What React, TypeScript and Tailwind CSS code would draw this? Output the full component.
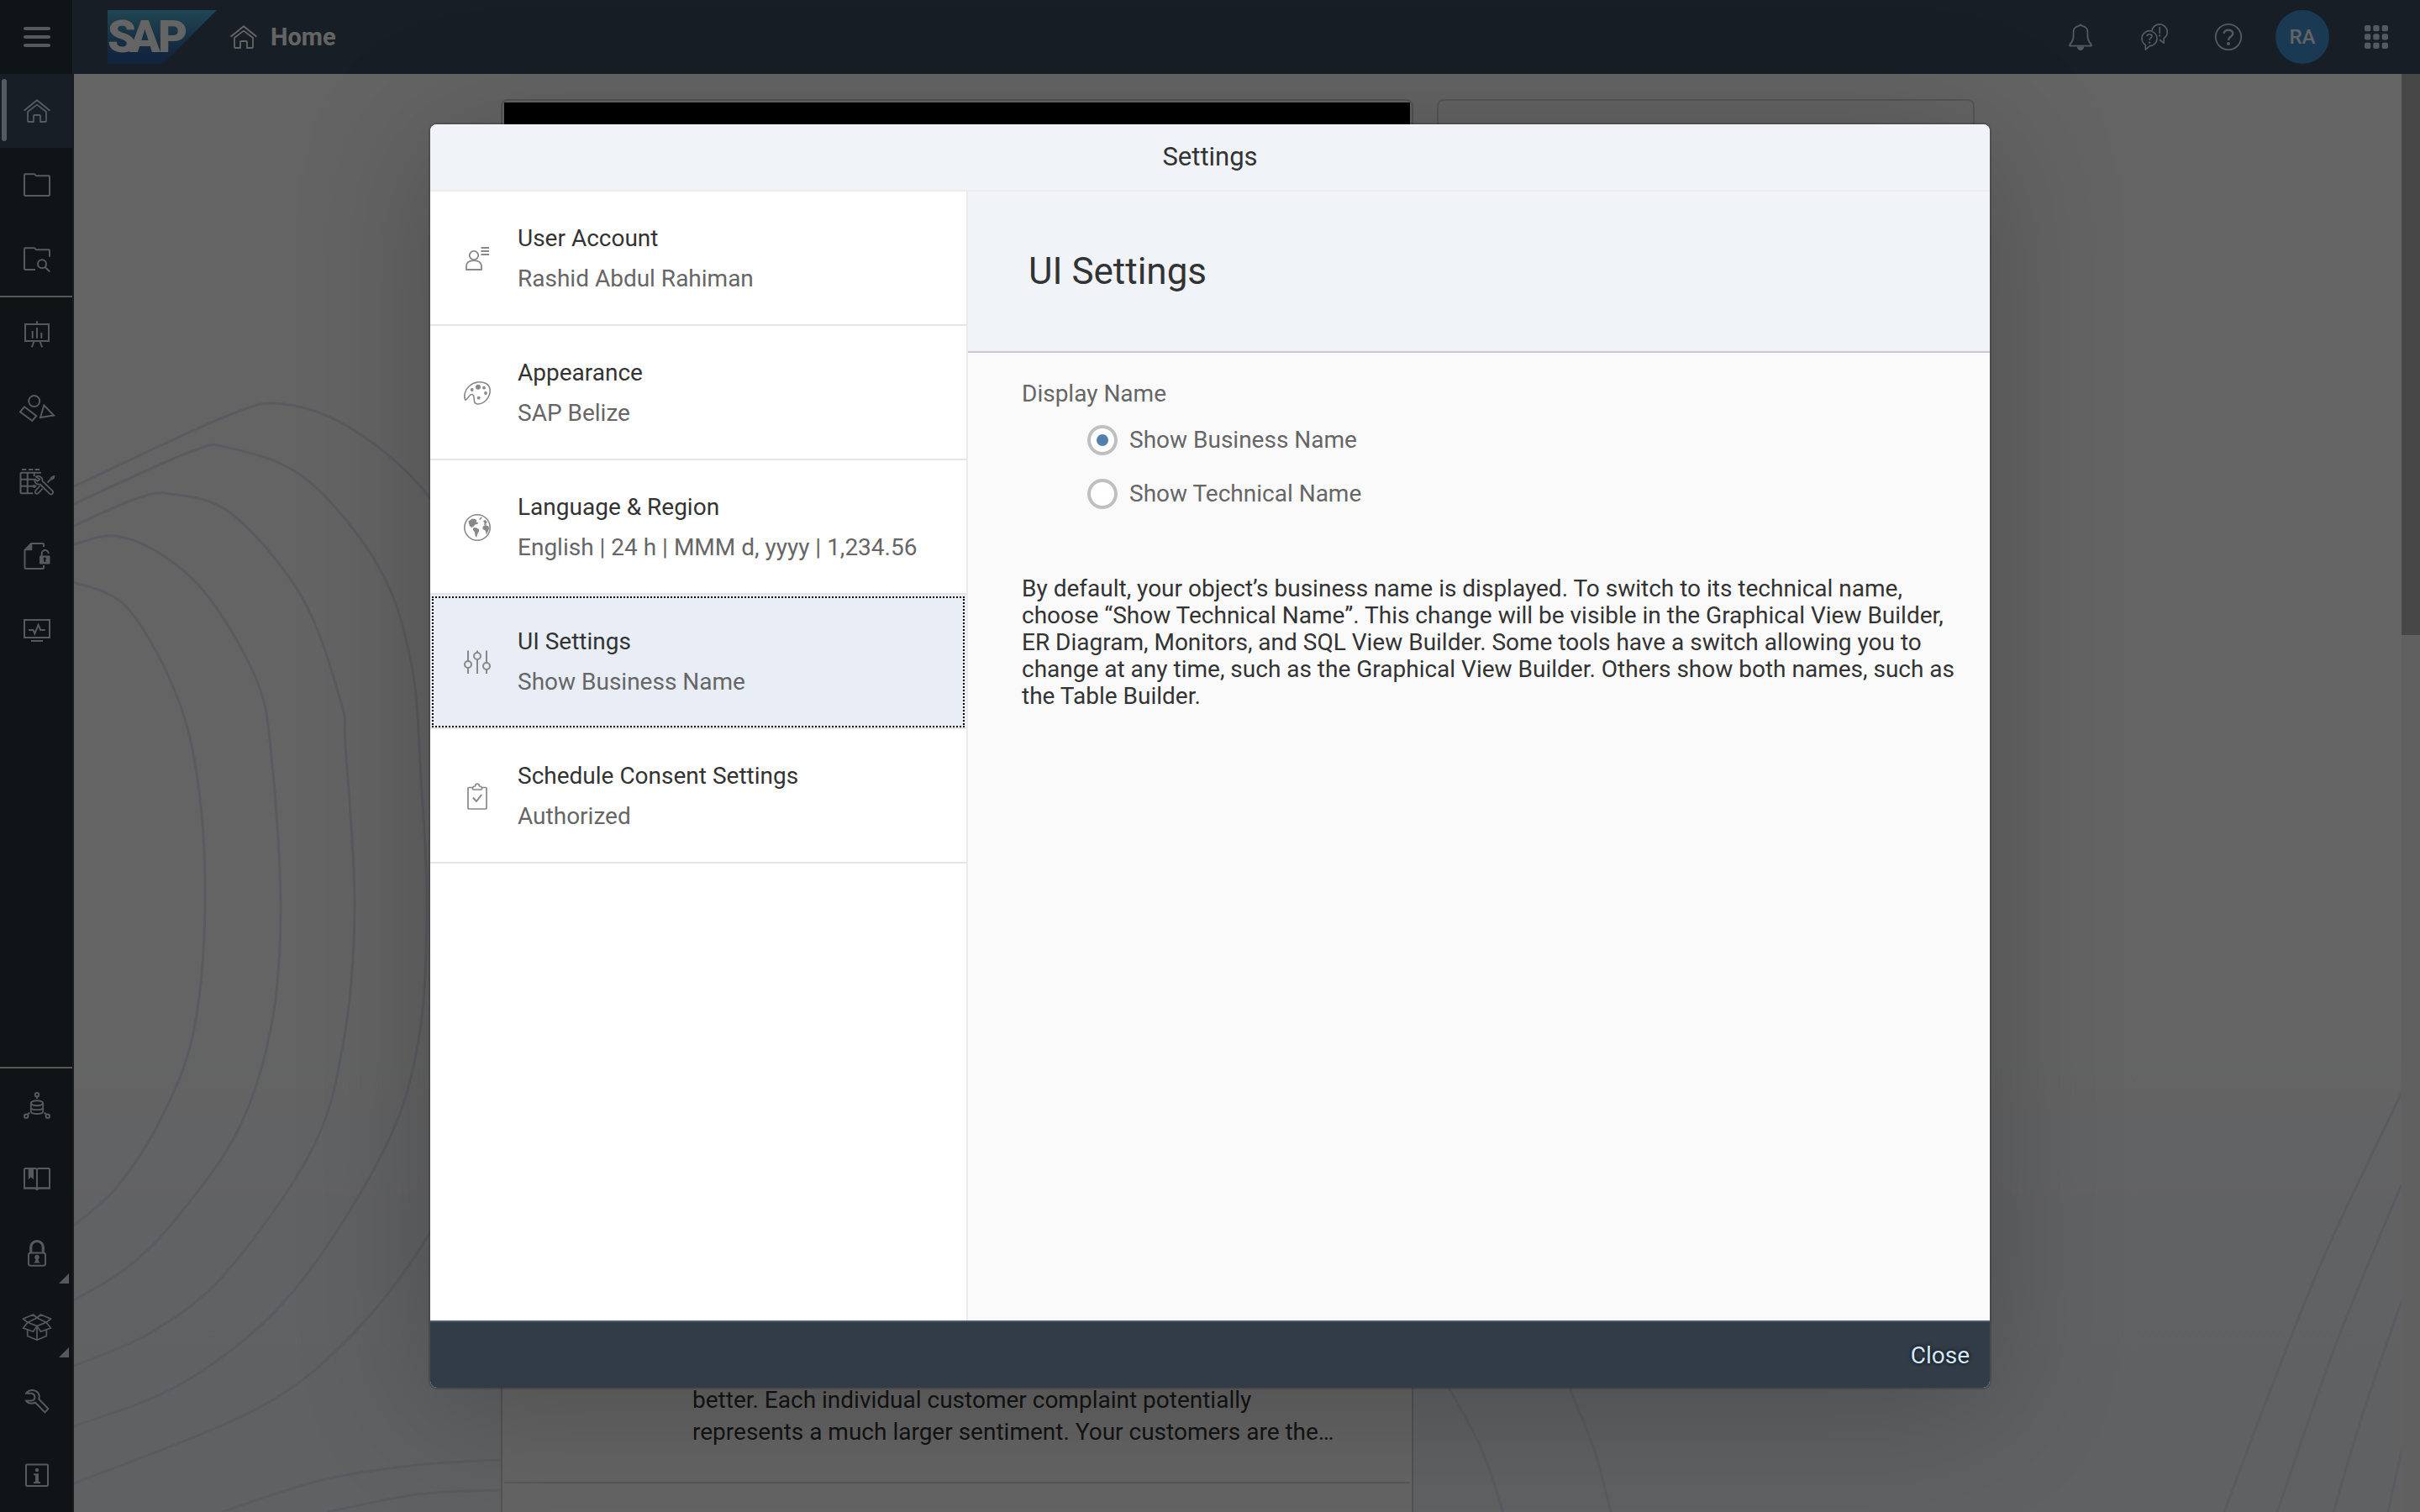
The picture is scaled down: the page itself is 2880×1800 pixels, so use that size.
import { useState, type ReactNode } from "react";

type IconProps = { children: ReactNode; wide?: boolean; fill?: boolean };

function Icon({ children, wide, fill }: IconProps) {
  return (
    <svg
      aria-hidden="true"
      viewBox={wide ? "0 0 44 32" : "0 0 32 32"}
      className={wide ? "h-8 w-11 shrink-0 overflow-visible" : "h-8 w-8 shrink-0 overflow-visible"}
      fill={fill ? "currentColor" : "none"}
      stroke={fill ? "none" : "currentColor"}
      strokeWidth={2}
      strokeLinejoin="round"
    >
      {children}
    </svg>
  );
}

const HomeIcon = () => (
  <Icon>
    <path d="M.6 15.8 16 3.2l15.4 12.6" />
    <path d="M5 17 16 8.6 27 17v11q0 1-1 1h-6v-7q0-1-1-1h-6q-1 0-1 1v7H6q-1 0-1-1z" strokeWidth={1.8} />
  </Icon>
);

const FolderIcon = () => (
  <Icon>
    <path d="M2 3.2h10.6q1 0 1.4 1t1.4 1H30q1 0 1 1V28q0 1-1 1H2q-1 0-1-1V4.200q0-1 1-1z" />
  </Icon>
);

const FolderSearchIcon = () => (
  <Icon>
    <path d="M14 29H2q-1 0-1-1V4.200q0-1 1-1h10.600q1 0 1.400 1t1.400 1H30q1 0 1 1v7.500" />
    <circle cx="22" cy="22.300" r="5" />
    <path d="m25.600 26 5.700 5.500" />
  </Icon>
);

const BoardIcon = () => (
  <Icon>
    <path d="M2 4h28v20H2zM16 .3V4M12.500 24.500 9.800 31.500M19.500 24.500l2.700 7M10.700 12v8.700M16 8v12.700M21.300 14v6.700" strokeLinejoin="miter" />
  </Icon>
);

const ShapesIcon = () => (
  <Icon wide>
    <circle cx="18.700" cy="7.500" r="6.500" />
    <path d="m7 14.300 14.300 10.800-5 5.900L2 20.300zM30.400 12.500l11.600 12-16 2.500z" strokeLinejoin="miter" />
  </Icon>
);

const TableToolsIcon = () => (
  <Icon wide>
    <path d="M4 1h5.300M12 1h5.300M19.500 1H25" />
    <path d="M17.300 29.300H3.500q-1 0-1-1V5.700q0-1 1-1H27M2.500 12.700h16.300M2.500 20.700h18.800M10.700 4.700v24.600M18.700 5v4M18.700 19v4" />
    <path d="M20.800 9.400c3-1.900 8.300.3 7.700 5.300l12 11.600c2 2.200-1.200 5.500-3.400 3.500L25.800 18.500c-4 1-7.300-2-6.300-6.200l3.200 2.500 2.600-2.200z" strokeWidth={1.8} />
    <path d="M34.500 16.500 38 13M38.500 12.500c0-2 1.500-3 4-3.700-.3 2.500-1.500 4-4 3.700z" strokeWidth={1.8} />
    <path d="m25.500 20.500-5.200 5.700c-1.600 2 .9 4.700 2.900 3.200l5.600-5.700" strokeWidth={1.8} />
  </Icon>
);

const FileUnlockIcon = () => (
  <Icon>
    <path d="M24 5V2q0-1-1-1H9L1.500 9v21q0 1 1 1H23q1 0 1-1v-3" />
    <path d="M1.500 9.300 9 1h1.300v7.300q0 1-1 1z" fill="currentColor" stroke="none" />
    <path d="M21.700 16v-3a4 4 0 0 1 8 0" />
    <path
      d="M20 15.400h10.500q1 0 1 1v8q0 1-1 1H20q-1 0-1-1v-8q0-1 1-1zM25.200 17.400a1.700 1.700 0 0 0-.9 3.100v2.500h1.900v-2.500a1.700 1.700 0 0 0-1-3.100z"
      fill="currentColor"
      fillRule="evenodd"
      stroke="none"
    />
  </Icon>
);

const MonitorIcon = () => (
  <Icon>
    <path d="M1 4h30v21H1zM9 29h14M6 16h5.500l1.800 4.300 4.300-10.500 2.600 6.200h5.600" strokeLinejoin="miter" />
  </Icon>
);

const DataIcon = () => (
  <Icon>
    <circle cx="16" cy="3.200" r="2.200" />
    <circle cx="3.200" cy="28.800" r="2.200" />
    <circle cx="28.800" cy="28.800" r="2.200" />
    <path d="M16 5.500V8M4.800 27.200 7.200 24.500M27.200 27.200l-2.400-2.700" />
    <ellipse cx="16" cy="13.200" rx="7.200" ry="3" />
    <path d="M8.800 13.200v9.800c0 4 14.400 4 14.400 0v-9.800M8.800 18.200c0 4 14.400 4 14.400 0" strokeWidth={1.8} />
  </Icon>
);

const BookIcon = () => (
  <Icon>
    <path d="M1 27V4q0-1 1-1h12q1.500 0 2 1.200Q16.500 3 18 3h12q1 0 1 1v23M16 4v22" />
    <path d="M0 25.200h14.200l1.800.8 1.800-.8H32v2.500H18.500L16 29.500l-2.500-1.800H0zM5.700 3H12v13.300l-3.100-3-3.200 3z" fill="currentColor" stroke="none" />
  </Icon>
);

const LockIcon = () => (
  <Icon>
    <rect x="6" y="15.500" width="20" height="15.300" rx="2.500" />
    <path d="M8.700 15V8.800a7.300 7.300 0 0 1 14.600 0V15" strokeWidth={3.2} />
    <path d="M16 17.800a3 3 0 0 0-1.500 5.500q-.2 2.800-2.500 4.300h8q-2.300-1.500-2.500-4.300A3 3 0 0 0 16 17.800z" fill="currentColor" stroke="none" />
  </Icon>
);

const BoxIcon = () => (
  <Icon>
    <path
      d="M5 10.300-.5 6l12-5L16 5l4.500-4 12 5L27 10.300 16 5zM27 10.300l5.500 6.700-12 4.300L16 14.600l11-4.300M5 10.300l-5.500 6.700 12 4.300 4.500-6.700zM4.700 19.500v7L16 31.200l11.300-4.700v-7M16 14.600v16.600"
      strokeWidth={1.7}
    />
  </Icon>
);

const WrenchIcon = () => (
  <Icon>
    <path d="M2.800 6.800C8 .5 17.500 2.300 18.800 10l-.4 3.800 11 11.300-4 4.300-11.200-11.600C10 19.200 5.500 18.700 2.800 15.500h6.700c5.200-1 5.200-7.700 0-8.700z" />
  </Icon>
);

const InfoIcon = () => (
  <Icon>
    <rect x="3" y="3.500" width="26" height="25.500" rx="1" />
    <path d="M12 14.300h6v9.700h2v2h-8v-2h2v-7.700h-2z" fill="currentColor" stroke="none" />
    <circle cx="16" cy="10" r="2.200" fill="currentColor" stroke="none" />
  </Icon>
);

const BellIcon = () => (
  <Icon>
    <path d="M16 1.300c-1 1-1 1.500-2.700 1.800C9.500 4 7.600 6.500 7.600 10c0 6.500.5 9.500-4.300 15.200q-.9 1.500.7 1.500h24q1.600 0 .7-1.500c-4.800-5.700-4.300-8.700-4.300-15.200 0-3.500-1.900-6-5.700-6.900C17 2.800 17 2.300 16 1.300z" strokeWidth={1.8} />
    <path d="M11.800 27.500h8.400c-.4 5.900-8 5.900-8.400 0z" fill="currentColor" stroke="none" />
  </Icon>
);

const FeedbackIcon = () => (
  <Icon>
    <path d="M5.300 31v-5.500A9 9 0 1 1 19 18c0 5-4 8.500-8.500 8.700z" strokeWidth={1.7} />
    <path d="M13 8.300A9.200 9.200 0 1 1 27.200 17.700v5.500L22 19.300" strokeWidth={1.7} />
    <path d="M7 15.200c.3-3.300 6-3.300 6 0 0 2-3 2-3 4.600M22.200 4v8" strokeWidth={1.7} />
    <circle cx="10" cy="22.600" r="1.200" fill="currentColor" stroke="none" />
    <circle cx="22.200" cy="14.400" r="1.200" fill="currentColor" stroke="none" />
  </Icon>
);

const HelpIcon = () => (
  <Icon>
    <circle cx="16" cy="16" r="15.200" strokeWidth={1.8} />
    <path d="M10.700 12c0-5.600 10.600-5.600 10.600 0 0 3.600-5.300 3.600-5.300 8" strokeWidth={2.4} />
    <circle cx="16" cy="24" r="2" fill="currentColor" stroke="none" />
  </Icon>
);

const GridIcon = () => (
  <Icon fill>
    {[2, 12.3, 22.7].map((y) =>
      [2, 12.3, 22.7].map((x) => <rect key={`${x}-${y}`} x={x} y={y} width="7.300" height="7.300" rx="2" />)
    )}
  </Icon>
);

const MenuIcon = () => (
  <Icon fill>
    <rect y="4" width="32" height="4" rx="2" />
    <rect y="14" width="32" height="4" rx="2" />
    <rect y="24" width="32" height="4" rx="2" />
  </Icon>
);

const AccountIcon = () => (
  <Icon>
    <circle cx="12" cy="12" r="5.200" strokeWidth={1.8} />
    <path d="M3 29v-3.500c0-5 3.500-7.300 9-7.300s9 2.300 9 7.300V29z" strokeWidth={1.8} />
    <path d="M20.500 3H30M20.500 7H30M20.500 11H30" strokeWidth={1.8} />
  </Icon>
);

const PaletteIcon = () => (
  <Icon>
    <path d="M2 24.300C-.5 20 1 12.500 6.500 7.500 12 2.500 20.500 1.500 26.300 4.500c5.500 3 6.200 10 3.200 15.500-2.500 5-7.500 8.500-12 9-3.500.3-5.200-1.500-5.200-5 0-3.500-.3-6.500-3-6.500C6 17.500 5 23.500 2 24.300z" strokeWidth={1.6} />
    <g fill="currentColor" stroke="none">
      <circle cx="9.700" cy="12" r="1.900" />
      <circle cx="17" cy="8.800" r="3" />
      <circle cx="24" cy="9.700" r="1.900" />
      <circle cx="26" cy="16" r="1.900" />
      <circle cx="17.700" cy="21.700" r="1.900" />
    </g>
  </Icon>
);

const GlobeIcon = () => (
  <Icon>
    <circle cx="16" cy="16" r="15.200" strokeWidth={1.6} />
    <g fill="currentColor" stroke="none">
      <path d="m5.500 8.500 4.500-3 4 .5 1.500 2-1 2 3-.3-1.500 2.300-2.500.5-2 2.500-1-.5-.5 2-3-2.200-1-3.300z" />
      <path d="m11 16.500 3-.5 4 2v2.500L16.500 23l-1.500 5-1.500-2.500-.5-4L11 19z" />
      <path d="m18 6 2.500-2.500L22 4l-2.500 3zM23 8l2.500-1 2.500 3-2 1.500 1.500 1L24 13l.5-2.500z" />
      <path d="m22.500 15 3-2 4 1.500.5 3-3 7-1.500-5-3-1.500z" />
    </g>
  </Icon>
);

const SlidersIcon = () => (
  <Icon>
    <circle cx="5" cy="19" r="4" />
    <circle cx="16" cy="9" r="4" />
    <circle cx="27" cy="21" r="4" />
    <path d="M5 2.500V15M5 23v7M16 2.500V5M16 13v17M27 2.500V17M27 25v5" />
  </Icon>
);

const ClipboardIcon = () => (
  <Icon>
    <path d="M11 5.500H6q-1 0-1 1V30q0 1 1 1h20q1 0 1-1V6.500q0-1-1-1h-5" strokeWidth={1.7} />
    <path d="M12 8q-2 0-1.500-2t2.800-2Q14 1.200 16 1.200T18.700 4q2.300 0 2.800 2T20 8z" strokeWidth={1.7} />
    <path d="m11 17.500 4 4.500 6.200-8" />
  </Icon>
);

function SapLogo() {
  return (
    <svg viewBox="0 0 130 64" className="h-16 w-[130px] shrink-0" role="img" aria-label="SAP">
      <defs>
        <linearGradient id="sap-blue" x1="0" y1="0" x2="0" y2="1">
          <stop offset="0" stopColor="#53aece" />
          <stop offset=".45" stopColor="#3f80ad" />
          <stop offset=".8" stopColor="#2f609d" />
          <stop offset="1" stopColor="#2e5899" />
        </linearGradient>
      </defs>
      <path d="M0 0h130L66 64H0z" fill="url(#sap-blue)" />
      <g fill="#fafafa" fontFamily="Roboto, sans-serif" fontWeight="900" fontSize="54">
        <text x="0" y="50">S</text>
        <text x="26" y="50">A</text>
        <text x="60" y="50">P</text>
      </g>
    </svg>
  );
}

type Point = [number, number];

const contours: Point[][] = [
  [[88, 693], [150, 722], [207, 820], [235, 927], [244, 1079], [230, 1230], [191, 1333], [140, 1412], [88, 1459]],
  [[88, 648], [136, 638], [192, 660], [249, 712], [306, 811], [323, 900], [334, 1079], [323, 1221], [283, 1346], [207, 1454], [150, 1510], [88, 1548]],
  [[88, 626], [161, 594], [203, 588], [276, 612], [360, 712], [406, 837], [411, 887], [422, 1079], [409, 1239], [371, 1369], [268, 1516], [180, 1586], [88, 1626]],
  [[88, 600], [226, 538], [272, 533], [364, 570], [452, 677], [490, 793], [501, 927], [508, 1079], [498, 1239], [455, 1373], [344, 1543], [220, 1645], [88, 1698]],
  [[88, 579], [268, 496], [337, 481], [421, 512], [511, 592], [580, 720], [600, 1079], [570, 1350], [511, 1469], [421, 1587], [306, 1677], [88, 1766]],
  [[264, 1800], [383, 1762], [497, 1744], [597, 1738]],
  [[390, 1800], [497, 1779], [597, 1774]],
  [[1690, 1600], [1724, 1652], [1763, 1725], [1789, 1800]],
  [[1850, 1600], [1868, 1652], [1897, 1725], [1917, 1800]],
  [[2858, 1301], [2767, 1493], [2700, 1660], [2647, 1800]],
  [[2858, 1410], [2780, 1600], [2710, 1800]],
  [[2858, 1549], [2813, 1680], [2777, 1800]],
  [[2858, 1727], [2842, 1800]],
];

/* Catmull-Rom spline through the points, as cubic Béziers. */
function smooth(points: Point[]) {
  let d = `M${points[0][0]} ${points[0][1]}`;
  for (let i = 0; i < points.length - 1; i++) {
    const a = points[Math.max(i - 1, 0)];
    const b = points[i];
    const c = points[i + 1];
    const e = points[Math.min(i + 2, points.length - 1)];
    d += `C${b[0] + (c[0] - a[0]) / 6} ${b[1] + (c[1] - a[1]) / 6} ${c[0] - (e[0] - b[0]) / 6} ${c[1] - (e[1] - b[1]) / 6} ${c[0]} ${c[1]}`;
  }
  return d;
}

function Contours() {
  return (
    <svg
      aria-hidden="true"
      viewBox="88 88 2770 1712"
      preserveAspectRatio="xMinYMin slice"
      className="absolute inset-0 h-full w-full"
      fill="none"
      stroke="#e1e1f2"
      strokeWidth={3}
    >
      {contours.map((points, i) => (
        <path key={i} d={smooth(points)} />
      ))}
    </svg>
  );
}

function SideButton({ label, icon, active, more }: { label: string; icon: ReactNode; active?: boolean; more?: boolean }) {
  return (
    <button
      type="button"
      aria-label={label}
      className={`relative flex h-[88px] w-full shrink-0 items-center justify-center pl-0.5 ${active ? "bg-[#3a4b5c]" : ""}`}
    >
      {active && <span className="absolute top-1.5 bottom-2 left-0.5 w-1.5 rounded-sm bg-[#d4e0f2]" />}
      {icon}
      {more && (
        <svg aria-hidden="true" viewBox="0 0 12 12" className="absolute right-1 bottom-2 h-3 w-3" fill="currentColor">
          <path d="M12 0v12H0z" />
        </svg>
      )}
    </button>
  );
}

function Sidebar() {
  return (
    <nav aria-label="Main" className="flex w-[88px] shrink-0 flex-col border-r-2 border-[#3f454c] bg-[#273239] text-[#d4e0f2]">
      <SideButton label="Home" icon={<HomeIcon />} active />
      <SideButton label="Repository" icon={<FolderIcon />} />
      <SideButton label="Repository Explorer" icon={<FolderSearchIcon />} />
      <hr className="border-t-2 border-[#dbd8d4]" />
      <SideButton label="Story Builder" icon={<BoardIcon />} />
      <SideButton label="Business Builder" icon={<ShapesIcon />} />
      <SideButton label="Data Builder" icon={<TableToolsIcon />} />
      <SideButton label="Data Access Controls" icon={<FileUnlockIcon />} />
      <SideButton label="Data Integration Monitor" icon={<MonitorIcon />} />
      <div className="flex-1" />
      <hr className="border-t-2 border-[#dbd8d4]" />
      <SideButton label="Connections" icon={<DataIcon />} />
      <SideButton label="Content" icon={<BookIcon />} />
      <SideButton label="Security" icon={<LockIcon />} more />
      <SideButton label="Transport" icon={<BoxIcon />} more />
      <SideButton label="System" icon={<WrenchIcon />} />
      <SideButton label="About" icon={<InfoIcon />} />
    </nav>
  );
}

function ShellButton({ label, children }: { label: string; children: ReactNode }) {
  return (
    <button type="button" aria-label={label} className="flex h-[88px] w-[88px] items-center justify-center">
      {children}
    </button>
  );
}

function ShellBar() {
  return (
    <header className="flex h-[88px] shrink-0 items-center bg-[#3a4b5c] text-[#d4e0f2]">
      <button type="button" aria-label="Menu" className="flex h-[88px] w-[86px] items-center justify-center bg-[#273239] pl-0.5">
        <MenuIcon />
      </button>
      <div className="ml-[42px] flex items-center gap-4">
        <SapLogo />
        <span className="flex items-center gap-4 text-[29px] leading-8 font-bold text-[#fafafa]">
          <HomeIcon />
          Home
        </span>
      </div>
      <div className="ml-auto flex items-center pr-2">
        <ShellButton label="Notifications"><BellIcon /></ShellButton>
        <ShellButton label="Feedback"><FeedbackIcon /></ShellButton>
        <ShellButton label="Help"><HelpIcon /></ShellButton>
        <ShellButton label="Profile">
          <span className="flex h-16 w-16 items-center justify-center rounded-full bg-[#4191cf] text-2xl font-medium text-[#fafafa]">RA</span>
        </ShellButton>
        <ShellButton label="Products"><GridIcon /></ShellButton>
      </div>
    </header>
  );
}

function HomePage() {
  return (
    <main className="relative min-w-0 flex-1 overflow-hidden bg-linear-to-b from-[#fafafa] from-65% to-[#eef3f8] to-90%">
      <Contours />
      <div className="relative grid grid-cols-[1086fr_640fr] items-start gap-7 px-[508px] pt-[30px]">
        <article className="rounded-lg border-2 border-[#cfcfcf] bg-[#fafafa] p-0.5">
          <div className="h-[700px] bg-black" />
          <p className="mt-[826px] ml-6 pl-[200px] text-[28px] leading-[38px] text-[#333]">
            better. Each individual customer complaint potentially
            <br />
            represents a much larger sentiment. Your customers are the…
          </p>
          <hr className="mt-10 border-t-2 border-[#dcdcdc]" />
          <div className="h-24" />
        </article>
        <aside className="h-[600px] rounded-lg border-2 border-[#d4d4d4] bg-[#fafafa]" />
      </div>
    </main>
  );
}

const sections = [
  { id: "account", title: "User Account", value: "Rashid Abdul Rahiman", icon: <AccountIcon /> },
  { id: "appearance", title: "Appearance", value: "SAP Belize", icon: <PaletteIcon /> },
  { id: "language", title: "Language & Region", value: "English | 24 h | MMM d, yyyy | 1,234.56", icon: <GlobeIcon /> },
  { id: "ui", title: "UI Settings", value: "Show Business Name", icon: <SlidersIcon /> },
  { id: "consent", title: "Schedule Consent Settings", value: "Authorized", icon: <ClipboardIcon /> },
];

function SettingsDialog() {
  const [section, setSection] = useState("ui");
  const [display, setDisplay] = useState("Business");

  return (
    <section
      role="dialog"
      aria-labelledby="settings-title"
      className="flex min-w-0 flex-1 flex-col overflow-hidden rounded-lg bg-[#fafafa] text-[28px] text-[#333] shadow-[0_0_0_2px_rgba(0,0,0,0.15),0_20px_160px_rgba(0,0,0,0.22)]"
    >
      <header className="flex h-20 shrink-0 items-center justify-center border-b-2 border-[#ebebeb] bg-[#f0f3f8]">
        <h1 id="settings-title" className="text-[31px]">Settings</h1>
      </header>
      <div className="flex min-h-0 flex-1">
        <nav aria-label="Settings sections" className="w-[640px] shrink-0 border-r-2 border-[#ebebeb] bg-white">
          {sections.map((s) => {
            const active = s.id === section;
            return (
              <button
                key={s.id}
                type="button"
                aria-current={active}
                onClick={() => setSection(s.id)}
                className={`relative flex w-full items-center gap-8 border-b-2 border-[#e5e5e5] pt-8 pb-[30px] pl-10 text-left leading-[48px] ${active ? "bg-[#e9eef6]" : ""}`}
              >
                {active && <span className="absolute inset-0.5 bottom-0 border-2 border-dotted border-black" />}
                <span className="text-[#888]">{s.icon}</span>
                <span>
                  <span className="block">{s.title}</span>
                  <span className="block text-[#666]">{s.value}</span>
                </span>
              </button>
            );
          })}
        </nav>
        <div className="min-w-0 flex-1">
          <div className="flex h-48 items-center border-b-2 border-[#c8cacd] bg-[#f0f3f8] px-[72px]">
            <h2 className="text-[44px]">UI Settings</h2>
          </div>
          <div className="px-16 pt-[33px]">
            <fieldset className="text-[#666]">
              <legend className="mb-[7px] leading-8">Display Name</legend>
              {["Business", "Technical"].map((kind) => (
                <label key={kind} className="ml-[78px] flex h-16 items-center gap-3.5">
                  <input
                    type="radio"
                    name="display-name"
                    checked={display === kind}
                    onChange={() => setDisplay(kind)}
                    className="flex h-9 w-9 appearance-none items-center justify-center rounded-full border-4 border-[#bfbfbf] bg-white checked:before:h-3.5 checked:before:w-3.5 checked:before:rounded-full checked:before:bg-[#5080ad]"
                  />
                  Show {kind} Name
                </label>
              ))}
            </fieldset>
            <p className="mt-[65px] -mr-8 leading-8">
              By default, your object’s business name is displayed. To switch to its technical name, choose “Show Technical Name”. This
              change will be visible in the Graphical View Builder, ER Diagram, Monitors, and SQL View Builder. Some tools have a switch
              allowing you to change at any time, such as the Graphical View Builder. Others show both names, such as the Table Builder.
            </p>
          </div>
        </div>
      </div>
      <footer className="flex h-20 shrink-0 items-center justify-end border-t-2 border-[#4b5a6b] bg-[#323c46] px-6 pt-0.5">
        <button type="button" className="text-[#d1e8ff] text-shadow-[0_0_4px_#000]">Close</button>
      </footer>
    </section>
  );
}

export default function App() {
  return (
    <div className="relative flex h-screen flex-col overflow-hidden font-['Roboto',sans-serif]">
      <ShellBar />
      <div className="flex min-h-0 flex-1">
        <Sidebar />
        <HomePage />
        <div aria-hidden="true" className="w-[22px] shrink-0 bg-[#f0f0f0]">
          <div className="h-[39%] bg-[#b2b2b2]" />
        </div>
      </div>
      <div className="absolute inset-0 flex bg-black/60 px-[512px] py-[148px]">
        <SettingsDialog />
      </div>
    </div>
  );
}
